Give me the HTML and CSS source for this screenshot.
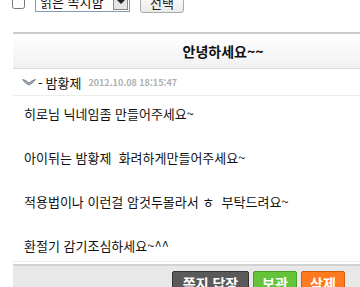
FILE: index.html
```html
<!DOCTYPE html>
<html lang="ko">
<head>
  <meta charset="UTF-8">
  <title>쪽지 보기</title>
  <link rel="stylesheet" href="styles.css">
</head>
<body>
  <div class="toolbar">
    <input type="checkbox" class="check">
    <div class="select">
      <span class="select-text">읽은 쪽지함</span>
      <span class="select-arrow"></span>
    </div>
    <button class="pick">선택</button>
  </div>

  <div class="message">
    <div class="title">안녕하세요~~</div>
    <div class="info">
      <svg class="icon" width="14" height="8" viewBox="0 0 14 8">
        <path d="M0.5 1.5 Q4 2 7 5 Q10 2 13.5 1.5 Q11 5.5 7 7 Q3 5.5 0.5 1.5 Z" fill="#a9b1ba" stroke="#6f7882" stroke-width="0.9"/>
      </svg>
      <span class="dash">-</span>
      <span class="name">밤황제</span>
      <span class="date">2012.10.08 18:15:47</span>
    </div>
    <div class="body">
      <p>히로님 닉네임좀 만들어주세요~</p>
      <p>아이뒤는 밤황제&nbsp;&nbsp;화려하게만들어주세요~</p>
      <p>적용법이나 이런걸 암것두몰라서 ㅎ&nbsp;&nbsp;부탁드려요~</p>
      <p>환절기 감기조심하세요~^^</p>
    </div>
    <div class="footer">
      <button class="btn btn-dark">쪽지 답장</button>
      <button class="btn btn-green">보관</button>
      <button class="btn btn-orange">삭제</button>
    </div>
  </div>
</body>
</html>
```

FILE: styles.css
```css
body {
  margin: 0;
  font-family: "Noto Sans CJK KR", "Noto Sans", sans-serif;
  font-size: 13px;
  color: #111;
  background: #fff;
  overflow: hidden;
  width: 360px;
  height: 287px;
}
.toolbar {
  display: flex;
  align-items: flex-end;
  height: 13px;
  padding-left: 12px;
  gap: 10px;
}
.check {
  margin: 0 0 4px 0;
  width: 13px;
  height: 13px;
}
.select {
  display: flex;
  align-items: center;
  width: 95px;
  height: 20px;
  border: 1px solid #7f9db9;
  box-sizing: border-box;
  background: #fff;
  margin-bottom: 1px;
}
.select-text {
  flex: 1;
  padding-left: 4px;
  font-size: 13px;
  line-height: 18px;
}
.select-arrow {
  width: 15px;
  height: 16px;
  margin-right: 1px;
  background: #e4e4e4;
  border: 1px solid #888;
  box-sizing: border-box;
  position: relative;
}
.select-arrow::after {
  content: "";
  position: absolute;
  left: 3px;
  top: 5px;
  border-left: 4px solid transparent;
  border-right: 4px solid transparent;
  border-top: 4px solid #222;
}
.pick {
  width: 44px;
  height: 22px;
  margin: 0;
  border: 1px solid #aaa;
  border-radius: 3px;
  background: linear-gradient(#fff, #ebebeb);
  font-family: inherit;
  font-size: 13px;
  color: #222;
}
.message {
  margin: 19px 0 0 13px;
  width: 420px;
  border-top: 2px solid #cccccc;
}
.title {
  height: 34px;
  line-height: 34px;
  text-align: center;
  font-size: 14px;
  font-weight: bold;
  background: linear-gradient(#ffffff, #f1f1f1);
  border-bottom: 1px solid #dcdcdc;
}
.info {
  display: flex;
  align-items: center;
  height: 26px;
  padding-left: 9px;
  border-bottom: 1px solid #ececec;
}
.icon {
  margin-right: 2px;
}
.dash {
  margin-right: 3px;
}
.name {
  font-size: 13px;
}
.date {
  margin-left: 7px;
  font-size: 9px;
  font-weight: bold;
  color: #b0b0b0;
}
.body {
  padding: 7px 0 4px 11px;
  border-bottom: 1px solid #ececec;
}
.body p {
  margin: 0 0 22px 0;
  line-height: 22px;
}
.body p:last-child {
  margin-bottom: 0;
}
.footer {
  display: flex;
  gap: 4px;
  margin-top: 2px;
  padding: 5px 88px 10px 0;
  justify-content: flex-end;
  background: #e8e8e8;
  border-top: 2px solid #d2d2d2;
}
.btn {
  height: 24px;
  padding: 0 6px;
  border-radius: 2px;
  font-family: inherit;
  font-size: 14px;
  font-weight: bold;
  color: #fff;
}
.btn-dark {
  width: 77px;
  background: #5a5a5a;
  border: 1px solid #333;
}
.btn-green {
  width: 44px;
  background: #63c43a;
  border: 1px solid #4a9e28;
}
.btn-orange {
  width: 44px;
  background: #ff7a1f;
  border: 1px solid #d45c10;
}
```
